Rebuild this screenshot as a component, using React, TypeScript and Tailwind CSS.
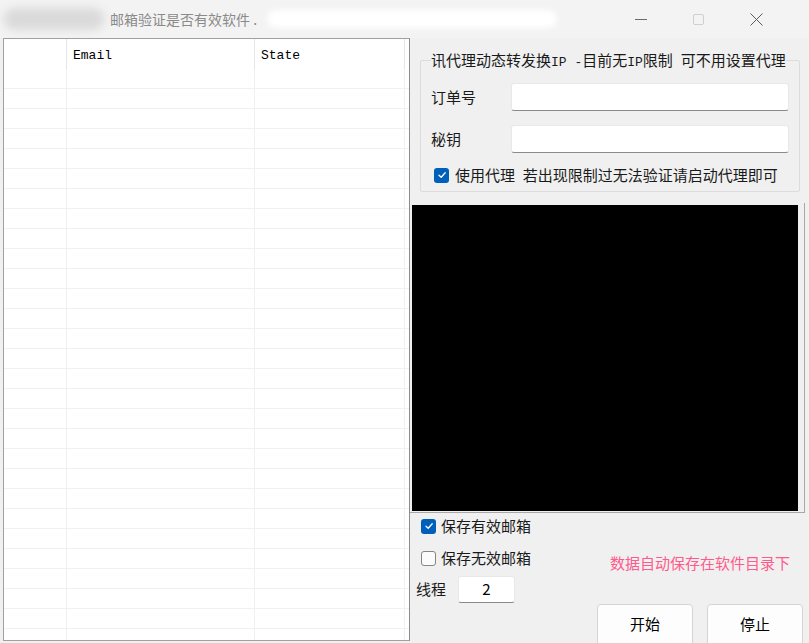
import React from 'react';

const FONT = '"Noto Sans CJK SC", "Noto Sans", sans-serif';

const Check: React.FC<{ checked?: boolean }> = ({ checked }) =>
  checked ? (
    <span className="flex h-[15px] w-[15px] shrink-0 items-center justify-center rounded-[3px] bg-[#005fb8]">
      <svg width="10" height="10" viewBox="0 0 10 10">
        <path d="M2 5.2 L4.2 7.3 L8.2 2.8" fill="none" stroke="#fff" strokeWidth="1.3" strokeLinecap="round" strokeLinejoin="round" />
      </svg>
    </span>
  ) : (
    <span className="h-[15px] w-[15px] shrink-0 rounded-[3px] border border-[#858585] bg-[#fbfbfb]" />
  );

const TitleBar: React.FC = () => (
  <div className="relative flex h-[38px] items-center bg-[#f3f3f3]">
    {/* blurred icon + name */}
    <div className="ml-[4px] h-[22px] w-[100px] rounded-full bg-[#dadada] blur-[4px]" />
    <span className="ml-[6px] text-[14px] text-[#8a8a8a]">邮箱验证是否有效软件 .</span>
    <div className="ml-[10px] h-[18px] w-[290px] rounded-full bg-white blur-[3px]" />
    <div className="ml-auto flex h-full items-center">
      <div className="flex w-[56px] justify-center">
        <svg width="12" height="12" viewBox="0 0 12 12">
          <path d="M0 6.5 H12" stroke="#6b6b6b" strokeWidth="1" />
        </svg>
      </div>
      <div className="flex w-[58px] justify-center">
        <span className="h-[11px] w-[11px] rounded-[2px] border border-[#cfcfcf]" />
      </div>
      <div className="mr-[24px] flex w-[58px] justify-center">
        <svg width="13" height="13" viewBox="0 0 13 13">
          <path d="M0.5 0.5 L12.5 12.5 M12.5 0.5 L0.5 12.5" stroke="#5a5a5a" strokeWidth="1" />
        </svg>
      </div>
    </div>
  </div>
);

const Row: React.FC<{ h: string; header?: boolean; children?: React.ReactNode }> = ({ h, header, children }) => (
  <div className={`flex ${h} ${header ? '' : 'border-b border-[#f0f0f0]'}`}>
    <div className={`w-[63px] shrink-0 border-r ${header ? 'border-[#e6e6e6] h-[31px]' : 'border-[#f0f0f0]'}`} />
    <div className={`w-[188px] shrink-0 border-r ${header ? 'border-[#e6e6e6] h-[31px]' : 'border-[#f0f0f0]'}`}>
      {header && children}
    </div>
    <div className={`w-[150px] shrink-0 border-r ${header ? 'border-[#e6e6e6] h-[31px]' : 'border-[#f0f0f0]'}`}>
      {header && <span className="ml-[6px] block pt-[7px] font-['Liberation_Mono'] text-[13px] text-black">State</span>}
    </div>
  </div>
);

const Table: React.FC = () => (
  <div className="ml-[3px] h-[603px] w-[407px] shrink-0 overflow-hidden border border-[#a0a0a0] border-r-[#8c8c8c] bg-white">
    <Row h="h-[32px]" header>
      <span className="ml-[6px] block pt-[7px] font-['Liberation_Mono'] text-[13px] text-black">Email</span>
    </Row>
    <Row h="h-[18px]" />
    {Array.from({ length: 28 }).map((_, i) => (
      <Row key={i} h="h-[20px]" />
    ))}
  </div>
);

const TextBox: React.FC<{ w: string; h: string; value?: string }> = ({ w, h, value }) => (
  <div
    className={`${w} ${h} flex items-center justify-center rounded-[3px] border border-[#e8e8e8] border-b-[#8a8a8a] bg-white text-[15px] text-black`}
  >
    {value}
  </div>
);

const Mono: React.FC<{ children: React.ReactNode }> = ({ children }) => (
  <span className="whitespace-pre font-['Liberation_Mono'] text-[13px] leading-none">{children}</span>
);

const App: React.FC = () => {
  return (
    <div className="h-[643px] w-[809px] overflow-hidden bg-[#f0f0f0] text-[#1a1a1a]" style={{ fontFamily: FONT }}>
      <TitleBar />
      <div className="flex">
        <Table />
        <div className="flex w-[399px] flex-col">
          <fieldset className="ml-[10px] mt-[12px] w-[380px] rounded-[2px] border border-[#dcdcdc] pb-[8px]">
            <legend className="ml-[10px] h-[20px] overflow-hidden text-[15px] leading-[20px]">
              讯代理动态转发换<Mono>IP -</Mono>目前无<Mono>IP</Mono>限制<Mono> </Mono>可不用设置代理
            </legend>
            <div className="mt-[13px] flex h-[28px] items-center">
              <span className="w-[90px] pl-[10px] text-[15px]">订单号</span>
              <TextBox w="w-[278px]" h="h-[28px]" />
            </div>
            <div className="mt-[14px] flex h-[28px] items-center">
              <span className="w-[90px] pl-[10px] text-[15px]">秘钥</span>
              <TextBox w="w-[278px]" h="h-[28px]" />
            </div>
            <div className="mt-[14px] flex h-[16px] items-center gap-[6px] pl-[13px]">
              <Check checked />
              <span className="text-[15px] leading-[16px]">
                使用代理<Mono> </Mono>若出现限制过无法验证请启动代理即可
              </span>
            </div>
          </fieldset>

          <div className="mt-[11px] w-[395px] border-b border-r border-[#a8a8a8] pb-[1px] pt-[2px]">
            <div className="ml-[2px] h-[306px] w-[386px] bg-black" />
          </div>

          <div className="flex">
            <div className="w-[187px] shrink-0 pt-[5px]">
              <div className="ml-[11px] flex h-[16px] items-center gap-[5px]">
                <Check checked />
                <span className="text-[15px]">保存有效邮箱</span>
              </div>
              <div className="ml-[11px] mt-[16px] flex h-[16px] items-center gap-[5px]">
                <Check />
                <span className="text-[15px]">保存无效邮箱</span>
              </div>
              <div className="ml-[6px] mt-[10px] flex items-center">
                <span className="w-[42px] text-[15px]">线程</span>
                <TextBox w="w-[57px]" h="h-[27px]" value="2" />
              </div>
            </div>
            <div className="flex flex-col pt-[39px]">
              <span className="pl-[13px] text-[15px] leading-[22px] text-[#ff5a8c]">数据自动保存在软件目录下</span>
              <div className="mt-[30px] flex gap-[14px]">
                <button className="h-[42px] w-[96px] rounded-[4px] border border-[#d4d4d4] bg-[#fdfdfd] pb-[2px] text-[15px] text-black">
                  开始
                </button>
                <button className="h-[42px] w-[96px] rounded-[4px] border border-[#d4d4d4] bg-[#fdfdfd] pb-[2px] text-[15px] text-black">
                  停止
                </button>
              </div>
            </div>
          </div>
        </div>
      </div>
    </div>
  );
};

export default App;
